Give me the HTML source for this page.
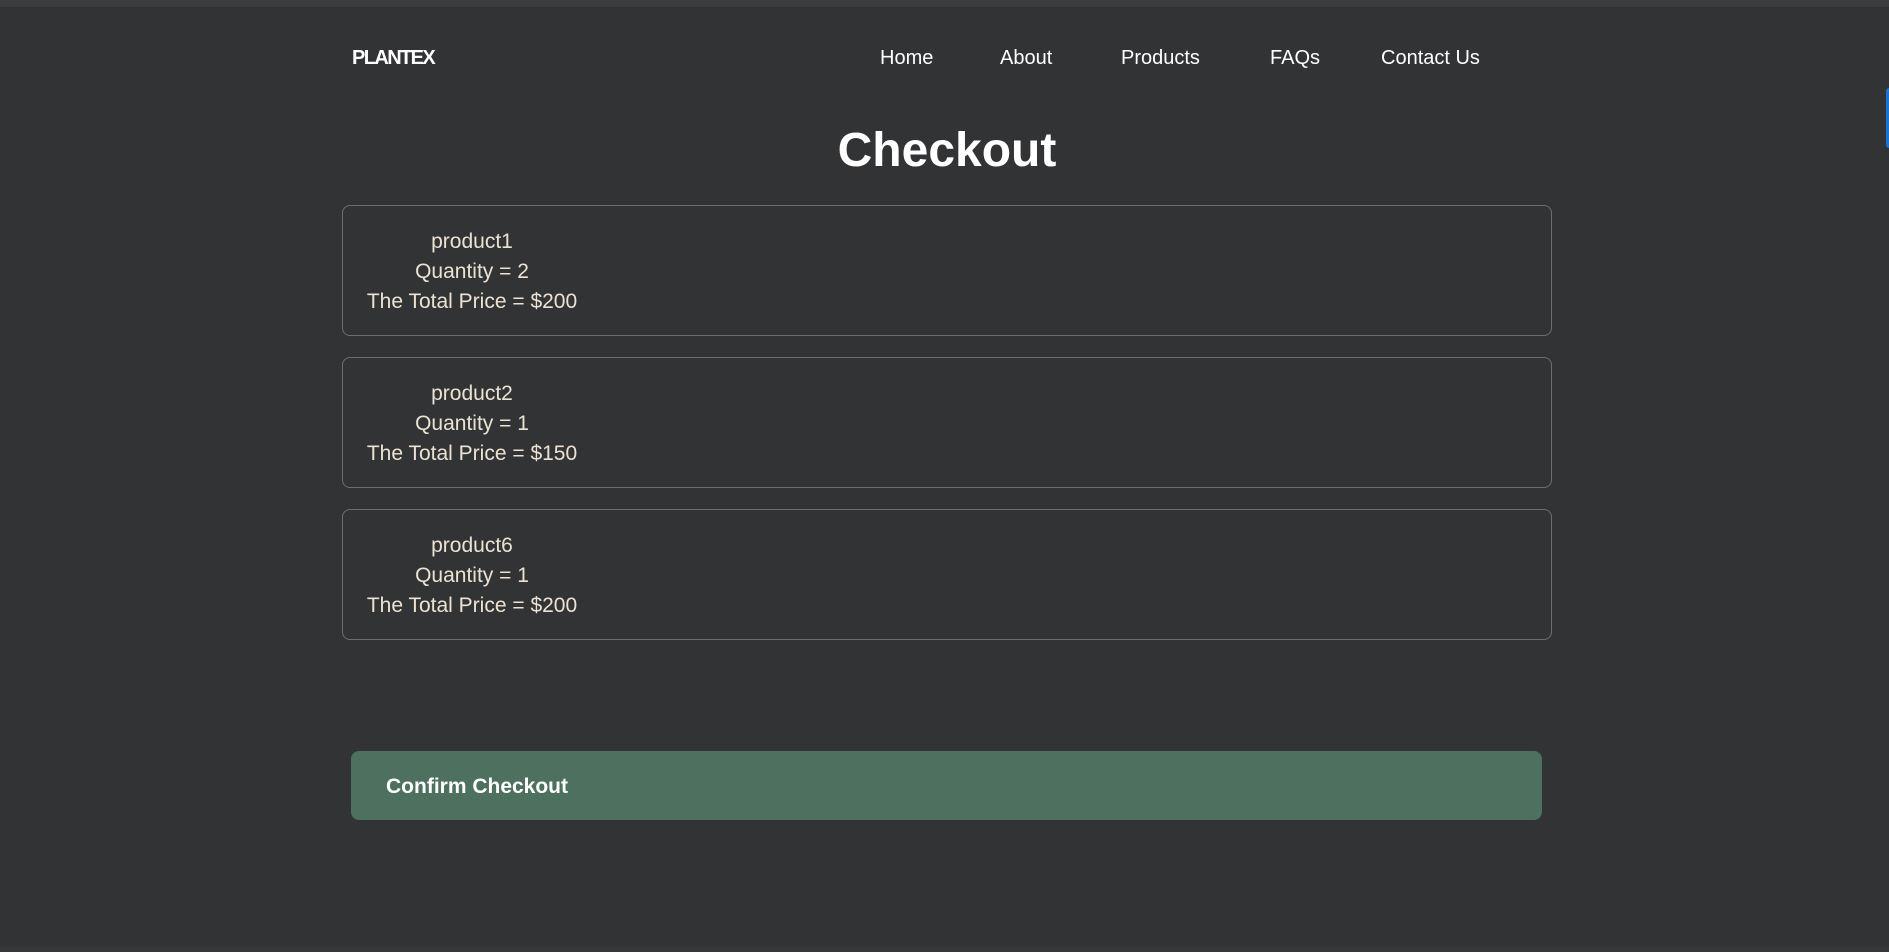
<!DOCTYPE html>
<html><head><meta charset="utf-8"><style>
*{margin:0;padding:0;box-sizing:border-box}
body{width:1889px;height:952px;background:#323335;font-family:"Liberation Sans",sans-serif;position:relative;overflow:hidden;color:#fff}
.top{position:absolute;left:0;top:0;width:1889px;height:7px;background:#3b3c3e}
.logo{position:absolute;left:352px;top:47px;font-size:20px;font-weight:bold;letter-spacing:-1.6px}
.nav a{position:absolute;top:47px;font-size:20px;color:#fff;text-decoration:none}
h1{position:absolute;left:0;width:1894px;text-align:center;top:123px;font-size:48px;font-weight:bold}
.card{position:absolute;left:342px;width:1210px;height:131px;border:1px solid #6c6f72;border-radius:8px}
.txt{position:absolute;left:15px;top:21px;width:228px;text-align:center;font-size:21px;line-height:30px;color:#ece2d2}
.btn{position:absolute;left:351px;top:751px;width:1191px;height:69px;background:#4e705f;border-radius:8px}
.btn span{position:absolute;left:35px;top:24px;font-size:21px;font-weight:bold;color:#fff}
.blue{position:absolute;left:1886px;top:88px;width:3px;height:60px;background:#1a73d0;border-radius:3px 0 0 3px}
.bot{position:absolute;left:0;top:946px;width:1889px;height:6px;background:#353638}
</style></head><body>
<div class="top"></div>
<div class="blue"></div>
<div class="logo">PLANTEX</div>
<div class="nav">
<a style="left:880px">Home</a><a style="left:1000px">About</a><a style="left:1121px">Products</a><a style="left:1270px">FAQs</a><a style="left:1381px">Contact Us</a>
</div>
<h1>Checkout</h1>
<div class="card" style="top:205px"><div class="txt">product1<br>Quantity = 2<br>The Total Price = $200</div></div>
<div class="card" style="top:357px"><div class="txt">product2<br>Quantity = 1<br>The Total Price = $150</div></div>
<div class="card" style="top:509px"><div class="txt">product6<br>Quantity = 1<br>The Total Price = $200</div></div>
<div class="btn"><span>Confirm Checkout</span></div>
<div class="bot"></div>
</body></html>
